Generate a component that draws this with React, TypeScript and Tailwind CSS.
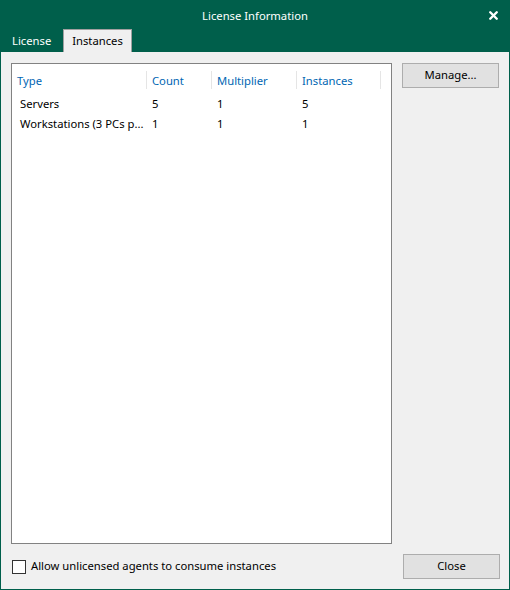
import { X } from 'lucide-react';

const columns = [
  { label: 'Type', width: 'w-[135px]' },
  { label: 'Count', width: 'w-[65px]' },
  { label: 'Multiplier', width: 'w-[85px]' },
  { label: 'Instances', width: 'w-[84px]' },
];

const rows = [
  ['Servers', '5', '1', '5'],
  ['Workstations (3 PCs p...', '1', '1', '1'],
];

const App = () => {
  return (
    <div className="w-[510px] h-[590px] bg-[#005f4b] flex flex-col text-[11.25px] text-black font-['Noto_Sans',sans-serif] select-none">
      <div className="relative h-[29px] flex items-center justify-center text-white">
        <span className="leading-none pt-[2px]">License Information</span>
        <X className="absolute right-[10px] top-[9px] w-[13px] h-[13px]" strokeWidth={4.5} />
      </div>

      <div className="h-[23px] flex items-end pl-[1px]">
        <div className="h-[22px] w-[62px] pl-[11px] flex items-center text-white">License</div>
        <div className="h-[23px] w-[69px] flex items-center justify-center bg-[#f0f0f0] border border-b-0 border-[#a0a0a0]">
          Instances
        </div>
      </div>

      <div className="flex-1 mx-[1px] mb-[1px] bg-[#f0f0f0] flex flex-col pt-[11px] pl-[10px] pr-[9px] pb-[10px]">
        <div className="flex-1 flex gap-[10px]">
          <div className="w-[381px] bg-white border border-[#828282] pt-[6px]">
            <div className="flex h-[20px]">
              {columns.map((c) => (
                <div key={c.label} className={`${c.width} flex items-center justify-between pl-[5px]`}>
                  <span className="text-[#0066b3] pt-[2px]">{c.label}</span>
                  <span className="w-px h-[18px] bg-[#e5e5e5]" />
                </div>
              ))}
            </div>
            <div className="mt-[4px]">
              {rows.map((r) => (
                <div key={r[0]} className="flex h-[20px] items-center">
                  <div className="w-[135px] pl-[8px] whitespace-nowrap">{r[0]}</div>
                  <div className="w-[65px] pl-[5px]">{r[1]}</div>
                  <div className="w-[85px] pl-[5px]">{r[2]}</div>
                  <div className="w-[84px] pl-[5px]">{r[3]}</div>
                </div>
              ))}
            </div>
          </div>
          <div>
            <button className="w-[97px] h-[25px] bg-[#e1e1e1] border border-[#adadad] flex items-center justify-center">
              Manage...
            </button>
          </div>
        </div>

        <div className="mt-[10px] flex items-center justify-between">
          <label className="flex items-center gap-[5px] pl-[1px]">
            <span className="w-[14px] h-[14px] bg-white border border-[#333333]" />
            <span>Allow unlicensed agents to consume instances</span>
          </label>
          <button className="w-[97px] h-[25px] bg-[#e1e1e1] border border-[#adadad] flex items-center justify-center">
            Close
          </button>
        </div>
      </div>
    </div>
  );
};

export default App;
